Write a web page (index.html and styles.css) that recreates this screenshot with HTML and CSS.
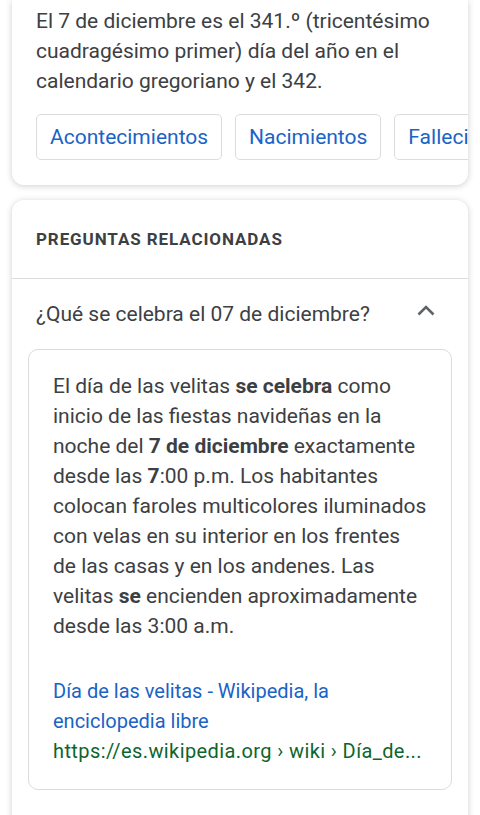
FILE: index.html
```html
<!DOCTYPE html>
<html lang="es">
  <head>
    <meta charset="UTF-8" />
    <meta name="viewport" content="width=device-width, initial-scale=1.0" />
    <title>7 de diciembre</title>
    <link rel="stylesheet" href="styles.css">
  </head>
  <body>
    <div class="card card-top">
      <p class="summary">El 7 de diciembre es el 341.º (tricentésimo cuadragésimo primer) día del año en el calendario gregoriano y el 342.</p>
      <div class="chips">
        <a class="chip">Acontecimientos</a>
        <a class="chip">Nacimientos</a>
        <a class="chip">Fallecimientos</a>
      </div>
    </div>

    <div class="card card-faq">
      <div class="faq-title">PREGUNTAS RELACIONADAS</div>
      <div class="question">
        <span>¿Qué se celebra el 07 de diciembre?</span>
        <svg class="chevron" width="24" height="24" viewBox="0 0 24 24">
          <path d="M4.5 15.5 L12 8 L19.5 15.5" fill="none" stroke="#5f6368" stroke-width="2.6" />
        </svg>
      </div>
      <div class="answer">
        <p class="answer-text">El día de las velitas <b>se celebra</b> como inicio de las fiestas navideñas en la noche del <b>7 de diciembre</b> exactamente desde las <b>7</b>:00 p.m. Los habitantes colocan faroles multicolores iluminados con velas en su interior en los frentes de las casas y en los andenes. Las velitas <b>se</b> encienden aproximadamente desde las 3:00 a.m.</p>
        <a class="source-title">Día de las velitas - Wikipedia, la enciclopedia libre</a>
        <div class="source-url">https://es.wikipedia.org › wiki › Día_de...</div>
      </div>
    </div>
  </body>
</html>
```

FILE: styles.css
```css
:root {
  --text: #3c4043;
  --blue: #1a63c6;
  --green: #0d652d;
  --line: #dadce0;
}

body {
  margin: 0;
  padding: 0 12px;
  background: #ffffff;
  font-family: Roboto, "Noto Sans", sans-serif;
  color: var(--text);
  overflow: hidden;
}

.card {
  background: #fff;
  border-radius: 12px;
  box-shadow: 0 1px 6px rgba(32, 33, 36, 0.22);
  overflow: hidden;
}

.card-top {
  border-radius: 0 0 12px 12px;
  padding: 6px 0 25px 24px;
}

.summary {
  margin: 0;
  padding-right: 24px;
  font-size: 21px;
  line-height: 30px;
}

.chips {
  display: flex;
  gap: 13px;
  margin-top: 18px;
}

.chip {
  flex: none;
  height: 46px;
  box-sizing: border-box;
  padding: 0 13px;
  display: flex;
  align-items: center;
  border: 1px solid var(--line);
  border-radius: 5px;
  color: var(--blue);
  font-size: 21px;
}

.card-faq {
  margin-top: 15px;
  padding-bottom: 40px;
}

.faq-title {
  height: 79px;
  box-sizing: border-box;
  padding: 28px 24px 0;
  font-size: 17px;
  font-weight: 700;
  letter-spacing: 0.9px;
  line-height: 22px;
  border-bottom: 1.5px solid var(--line);
}

.question {
  display: flex;
  align-items: center;
  justify-content: space-between;
  height: 70px;
  padding: 0 30px 0 24px;
  font-size: 21px;
}

.chevron {
  margin-top: -6px;
}

.answer {
  margin: 0 16px;
  padding: 21px 24px 23px;
  border: 1.5px solid var(--line);
  border-radius: 10px;
}

.answer-text {
  margin: 0 0 35px;
  font-size: 21px;
  line-height: 30px;
}

.answer-text b {
  font-weight: 700;
}

.source-title {
  display: block;
  color: var(--blue);
  font-size: 20px;
  line-height: 30px;
}

.source-url {
  color: var(--green);
  font-size: 20px;
  letter-spacing: 0.4px;
  line-height: 30px;
  white-space: nowrap;
}
```
